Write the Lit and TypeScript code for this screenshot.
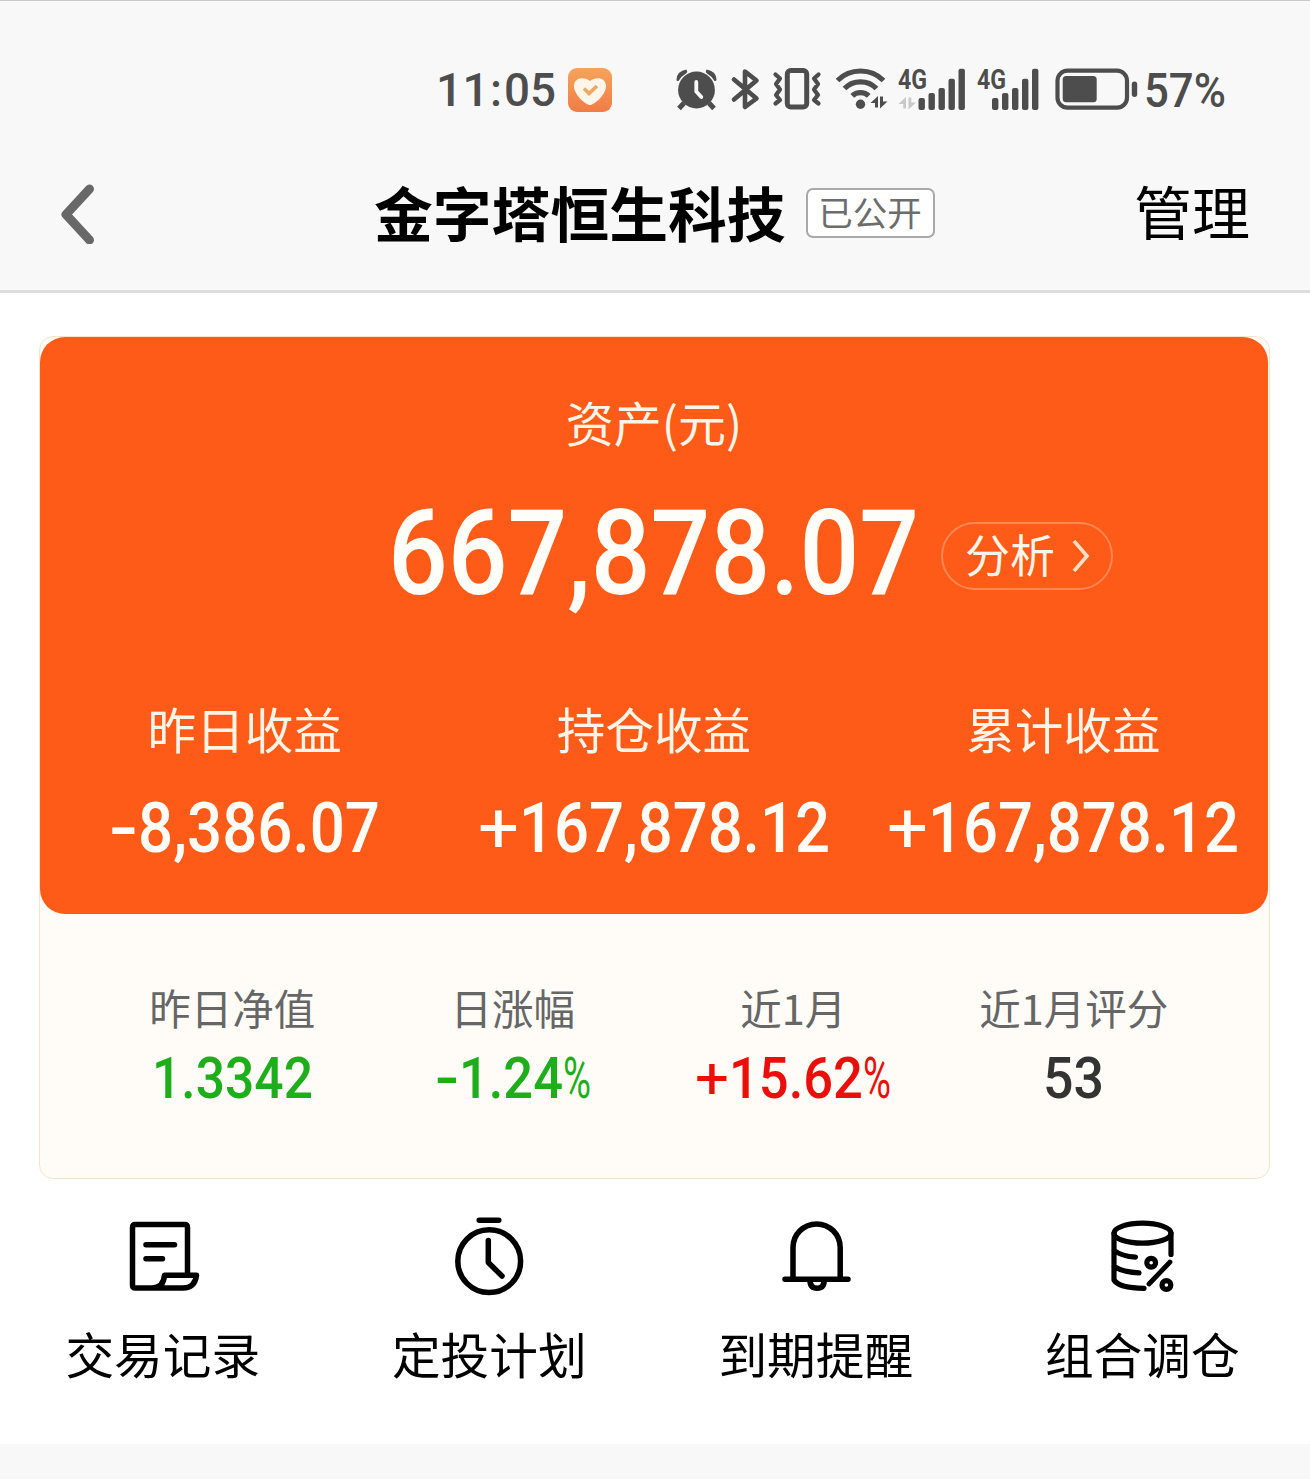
import { LitElement, html, svg, css, type TemplateResult } from "lit";
import { customElement, property } from "lit/decorators.js";

interface Segment {
  text: string;
  x: number;
  width: number;
  light: boolean;
}

/** A figure set to an exact width; sign and percent unit are fitted on their own. */
@customElement("fit-figure")
class FitFigure extends LitElement {
  @property() value = "";
  @property({ type: Number }) width = 100;
  @property({ type: Number }) size = 50;
  @property({ type: Number }) sign = 0;
  @property({ type: Number }) unit = 0;

  static styles = css`
    :host { display: block; color: inherit; }
    .figure { display: block; overflow: visible; fill: currentColor; font-family: Roboto, "Liberation Sans", sans-serif; font-weight: 500; }
    .light { font-weight: 400; }
  `;

  private segments(): Segment[] {
    const out: Segment[] = [];
    let main = this.value;
    if (this.sign) {
      out.push({ text: main[0], x: 0, width: this.sign, light: main[0] === "+" });
      main = main.slice(1);
    }
    const unit = this.unit && main.endsWith("%") ? this.unit : 0;
    if (unit) main = main.slice(0, -1);
    out.push({ text: main, x: this.sign, width: this.width - this.sign - unit, light: false });
    if (unit) out.push({ text: "%", x: this.width - unit, width: unit, light: true });
    return out;
  }

  updated() {
    const parts = this.segments();
    this.renderRoot.querySelectorAll<SVGTextElement>("text").forEach((node, i) => {
      const part = parts[i];
      const scale = part.width / (node.getComputedTextLength() || part.width);
      node.setAttribute("transform", `translate(${part.x} 0) scale(${scale} 1)`);
    });
  }

  render() {
    const h = this.size * 0.711;
    return html`<svg class="figure" width=${this.width} height=${h}>
      ${this.segments().map((s) => svg`<text class=${s.light ? "light" : "main"} y=${h} font-size=${this.size}>${s.text}</text>`)}
    </svg>`;
  }
}

const statusIcon = (x: number, w: number, body: TemplateResult) =>
  html`<svg class="status-icon" width=${w} height="60" viewBox="${x} 60 ${w} 60">${body}</svg>`;

const bars = (x: number) =>
  [98, 93, 88, 78.7, 68.7].map(
    (top, i) => svg`<rect x=${x + i * 10} y=${top} width="6.4" height=${110 - top} rx="2" />`,
  );

const alarm = svg`
  <circle cx="696.5" cy="90" r="18.4" />
  <path d="M684 103l-5 5.500M709 103l5 5.500" stroke="#4d4d4d" stroke-width="5" />
  <path d="M676.500 79.500Q677 71 686.500 69.500Q688 71.500 686 73.500Q681.500 76 678.500 81Q676.500 81.500 676.500 79.500ZM716.500 79.500Q716 71 706.500 69.500Q705 71.500 707 73.500Q711.500 76 714.500 81Q716.500 81.500 716.500 79.500Z" />
  <path d="M696.300 82v9.500l5 5.500" stroke="#f8f8f8" stroke-width="3.800" fill="none" stroke-linecap="round" />`;

const bluetooth = svg`<path d="M734 79.500L756.500 98.500L745 107V71.500L756.500 80.500L734 99.500" fill="none" stroke="#4d4d4d" stroke-width="4.600" stroke-linejoin="round" stroke-linecap="round" />`;

const vibrate = svg`<g fill="none" stroke="#4d4d4d">
  <rect x="787.300" y="70.500" width="19.400" height="36.500" rx="3.500" stroke-width="5" />
  <path d="M775.500 74.500l4.500 4l-4 5.500l4 5.500l-4 5.500l4 5l-4.500 3.500M818.500 74.500l-4.500 4l4 5.500l-4 5.500l4 5.500l-4 5l4.500 3.500" stroke-width="4.200" stroke-linejoin="round" stroke-linecap="round" /></g>`;

const wifi = svg`
  <g fill="none" stroke="#4d4d4d" stroke-width="5.200">
    <path d="M837.500 80.500Q847 71 860.500 71T883.500 80.500" />
    <path d="M844.500 88.500Q851 81.800 860.500 81.800T876.500 88.500" />
    <path d="M852.300 95.800Q855.500 92.600 860.500 92.600T868.700 95.800" />
  </g>
  <circle cx="860.500" cy="104.300" r="4.700" />
  <path d="M878 96v11.500h-3v-4.500h-4.500zM880 108.500v-12h3v5h4.500z" />`;

const signal = (x: number, barX: number, data: boolean) => svg`
  <text class="network" x=${x} y="88.600" textLength="29" lengthAdjust="spacingAndGlyphs">4G</text>
  ${data ? svg`<path fill="#c8c8c8" d="M906 97v11.500h-2.700v-4.500h-4.800zM908.500 109.500v-12h2.700v5h4.800z" />` : ""}
  ${bars(barX)}`;

const battery = svg`
  <rect x="1057.500" y="70.700" width="69.500" height="37" rx="10" fill="none" stroke="#4d4d4d" stroke-width="4.200" />
  <rect x="1062.700" y="76" width="34" height="26.300" rx="3.500" />
  <rect x="1131.800" y="81.500" width="5.400" height="15.500" rx="2.700" />`;

const actions = [
  {
    label: "交易记录",
    icon: svg`<path d="M64.500 60V12.500Q64.500 9.500 61.500 9.500H12.500Q9.500 9.500 9.500 12.500V70Q9.500 73 12.500 73H60Q72 73 73.500 60.300H41.500Q40.500 73 29 73" />
      <path d="M23 29.700H51.500M23 43.700H39.500" />`,
  },
  {
    label: "定投计划",
    icon: svg`<circle cx="39.200" cy="46.200" r="31.400" /><path d="M29.200 5.300H48.800M38.300 25.500V47.500L52 61" />`,
  },
  {
    label: "到期提醒",
    icon: svg`<path d="M17 64V32.500A23.600 23.600 0 0 1 64.200 32.500V64M9 64.300H72M34 65Q34 73.300 41.100 73.300T48.200 65" />`,
  },
  {
    label: "组合调仓",
    icon: svg`<g stroke-width="5.200"><ellipse cx="39.500" cy="18.200" rx="28.500" ry="10" />
      <path d="M11 18.200V65Q16 73 41 73.300M68 18.200V39.500M11 35.500Q19 41.300 32.500 42.200M11 51.500Q20 57.300 36 57.800" />
      <path d="M67 47L46 69" stroke-width="4.800" /><circle cx="48.200" cy="47.700" r="4.400" /><circle cx="63.400" cy="70" r="4.400" /></g>`,
  },
];

const profits = [
  { label: "昨日收益", value: "-8,386.07", width: 271, sign: 29 },
  { label: "持仓收益", value: "+167,878.12", width: 352, sign: 41 },
  { label: "累计收益", value: "+167,878.12", width: 352, sign: 41 },
];

const metrics = [
  { label: "昨日净值", value: "1.3342", width: 161, sign: 0, unit: 0, tone: "down" },
  { label: "日涨幅", value: "-1.24%", width: 156, sign: 24, unit: 28, tone: "down" },
  { label: "近1月", value: "+15.62%", width: 196, sign: 34, unit: 28, tone: "up" },
  { label: "近1月评分", value: "53", width: 61, sign: 0, unit: 0, tone: "plain" },
];

@customElement("app-root")
class AppRoot extends LitElement {
  static styles = css`
    :host {
      display: block;
      height: 1483px;
      overflow: hidden;
      background: #fff;
      color: #000;
      font-family: "Noto Sans CJK SC", sans-serif;
      white-space: nowrap;
    }
    * { box-sizing: border-box; }
    .header { height: 293px; background: #f8f8f8; border-top: 1px solid #c9c9c9; border-bottom: 3px solid #dedede; }
    .status { display: flex; align-items: center; height: 60px; margin-top: 59px; padding-left: 436px; color: #4d4d4d; }
    .time { display: flex; align-items: center; width: 120px; }
    .colon { margin: 0 2px 0 1px; }
    .app-badge { display: block; margin: 0 60px 0 12px; }
    .status-icon { display: block; flex: none; fill: #4d4d4d; }
    .network { font: 700 27px Roboto, sans-serif; }
    .level { margin-left: 4px; }
    .nav { display: grid; grid-template-columns: 374px 1fr auto; align-items: center; height: 90px; margin-top: 48px; padding-right: 60px; }
    .back { display: block; margin: 2px 0 0 56px; }
    .heading { display: flex; align-items: center; gap: 20px; }
    .title { margin: 0; font-size: 58.800px; line-height: 84px; font-weight: 700; transform: translateY(-1.500px); }
    .tag { width: 129px; height: 50px; border: 2px solid #a9a9a9; border-radius: 7px; background: #fff; color: #6c6c6c; font-size: 34.500px; line-height: 42px; text-align: center; }
    .manage { font-size: 58px; line-height: 84px; transform: translateY(-3px); }
    .card { width: 1231px; height: 843px; margin: 43px 0 0 39px; border: 1.500px solid #f3e5cd; border-radius: 14px; background: #fffcf7; }
    .assets { width: 1228px; height: 577px; border-radius: 25px; background: #fd5b17; color: #fffdf8; padding-top: 54px; }
    .caption { height: 60px; font-size: 48px; line-height: 60px; text-align: center; color: #fff4e8; }
    .total { display: grid; grid-template-columns: 348px 531px auto; align-items: center; margin-top: 59px; height: 84px; }
    .analysis { display: flex; align-items: center; justify-content: space-between; grid-column: 3; width: 172px; height: 68px; margin: 8px 0 0 22px; padding: 0 20px 0 22px; border: 2px solid #fe8754; border-radius: 34px; font-size: 45px; line-height: 60px; color: #fff4e8; }
    .analysis-text { transform: translateY(-2px); }
    .total-value { grid-column: 2; }
    .profits { display: grid; grid-template-columns: repeat(3, 1fr); margin-top: 104px; }
    .cell { display: flex; flex-direction: column; align-items: center; }
    .profit-label { font-size: 48.600px; line-height: 60px; height: 60px; color: #fff4e8; margin-bottom: 44px; }
    .metrics { display: grid; grid-template-columns: repeat(4, 280.500px); margin: 63px 0 0 52px; }
    .metric-label { font-size: 41.500px; line-height: 60px; height: 60px; color: #666; margin-bottom: 20px; }
    .down { color: #1fae1b; }
    .up { color: #ea0f0b; }
    .plain { color: #333; }
    .actions { display: grid; grid-template-columns: repeat(4, 326.500px); margin-top: 36px; height: 229px; }
    .action-icon { display: block; fill: none; stroke: #000; stroke-width: 5.500; stroke-linecap: round; stroke-linejoin: round; overflow: visible; }
    .action-label { font-size: 48.700px; line-height: 60px; margin-top: 28px; transform: translateX(-0.500px); }
    .footer { height: 35px; background: #f8f8f8; }
  `;

  render() {
    return html`
      <header class="header">
        <div class="status">
          <div class="time">
            <fit-figure value="11" width="53" size="47"></fit-figure>
            <fit-figure class="colon" value=":" width="12" size="47"></fit-figure>
            <fit-figure value="05" width="52" size="47"></fit-figure>
          </div>
          <svg class="app-badge" width="44" height="44" viewBox="0 0 44 44">
            <defs><linearGradient id="warm" x1="0" y1="0" x2="0" y2="1"><stop offset="0" stop-color="#f5a45a" /><stop offset="1" stop-color="#f17c46" /></linearGradient></defs>
            <rect width="44" height="44" rx="9" fill="url(#warm)" />
            <path d="M22 37C18 37 6 27 6 18C6 9.500 16 8 22 13C28 8 38 9.500 38 18C38 27 26 37 22 37Z" fill="#fff5e8" />
            <path d="M16 20.500L21 25.500L29 18" fill="none" stroke="#eda865" stroke-width="3.600" />
          </svg>
          ${statusIcon(672, 52, alarm)}
          ${statusIcon(724, 42, bluetooth)}
          ${statusIcon(766, 62, vibrate)}
          ${statusIcon(828, 65, wifi)}
          ${statusIcon(893, 79, signal(898, 918.5, true))}
          ${statusIcon(972, 76, signal(977, 992, false))}
          ${statusIcon(1048, 92, battery)}
          <fit-figure class="level" value="57%" width="82" size="48"></fit-figure>
        </div>
        <nav class="nav">
          <svg class="back" width="40" height="60" viewBox="0 0 40 60"><path d="M33.500 5L10 30.500L33.500 56" fill="none" stroke="#686868" stroke-width="9" stroke-linecap="round" stroke-linejoin="round" /></svg>
          <div class="heading"><h1 class="title">金字塔恒生科技</h1><span class="tag">已公开</span></div>
          <span class="manage">管理</span>
        </nav>
      </header>
      <section class="card">
        <div class="assets">
          <div class="caption">资产(元)</div>
          <div class="total">
            <fit-figure class="total-value" value="667,878.07" width="531" size="118"></fit-figure>
            <div class="analysis">
              <span class="analysis-text">分析</span>
              <svg width="20" height="36" viewBox="0 0 20 36"><path d="M3 3L16 18L3 33" fill="none" stroke="#ffdfc8" stroke-width="3.600" /></svg>
            </div>
          </div>
          <div class="profits">
            ${profits.map((p) => html`<div class="cell"><span class="profit-label">${p.label}</span><fit-figure .value=${p.value} .width=${p.width} .sign=${p.sign} .size=${70}></fit-figure></div>`)}
          </div>
        </div>
        <div class="metrics">
          ${metrics.map((m) => html`<div class="cell"><span class="metric-label">${m.label}</span><fit-figure class=${m.tone} .value=${m.value} .width=${m.width} .sign=${m.sign} .unit=${m.unit} .size=${57.5}></fit-figure></div>`)}
        </div>
      </section>
      <section class="actions">
        ${actions.map((a) => html`<div class="cell"><svg class="action-icon" width="80" height="80" viewBox="0 0 80 80">${a.icon}</svg><span class="action-label">${a.label}</span></div>`)}
      </section>
      <div class="footer"></div>
    `;
  }
}
